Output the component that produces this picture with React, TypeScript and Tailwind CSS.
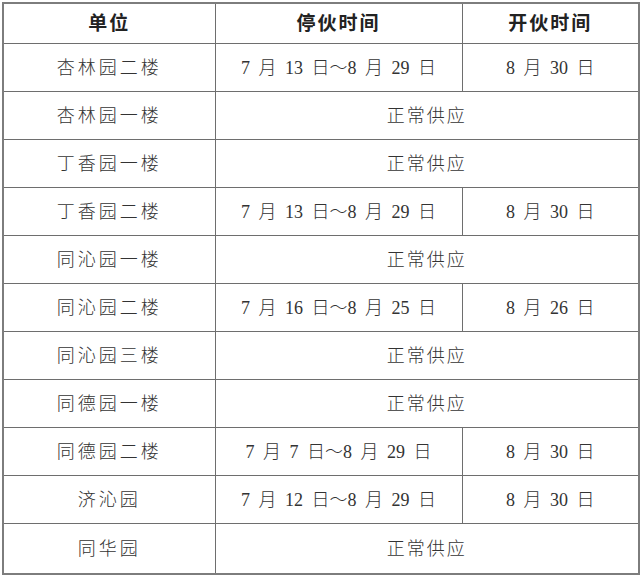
import React from "react";

type Row = { name: string; stop?: string; open?: string };

const rows: Row[] = [
  { name: "杏林园二楼", stop: "7 月 13 日～8 月 29 日", open: "8 月 30 日" },
  { name: "杏林园一楼" },
  { name: "丁香园一楼" },
  { name: "丁香园二楼", stop: "7 月 13 日～8 月 29 日", open: "8 月 30 日" },
  { name: "同沁园一楼" },
  { name: "同沁园二楼", stop: "7 月 16 日～8 月 25 日", open: "8 月 26 日" },
  { name: "同沁园三楼" },
  { name: "同德园一楼" },
  { name: "同德园二楼", stop: "7 月 7 日～8 月 29 日", open: "8 月 30 日" },
  { name: "济沁园", stop: "7 月 12 日～8 月 29 日", open: "8 月 30 日" },
  { name: "同华园" },
];

const font = { fontFamily: '"Liberation Serif", "Noto Sans CJK SC", serif' };

export default function App() {
  return (
    <div className="w-[640px] h-[577px] bg-white pt-[2px] pl-[2px]">
      <table
        className="border-collapse border-2 border-[#7d7d7d] text-[#333] w-[636px] table-fixed"
        style={font}
      >
        <colgroup>
          <col className="w-[212px]" />
          <col className="w-[247px]" />
          <col className="w-[177px]" />
        </colgroup>
        <thead>
          <tr className="h-[40px]">
            <th className="border border-[#6e6e6e] text-[19px] font-bold tracking-[2px] text-[#222] pt-[2px]">单位</th>
            <th className="border border-[#6e6e6e] text-[19px] font-bold tracking-[2px] text-[#222] pt-[2px]">停伙时间</th>
            <th className="border border-[#6e6e6e] text-[19px] font-bold tracking-[2px] text-[#222] pt-[2px]">开伙时间</th>
          </tr>
        </thead>
        <tbody>
          {rows.map((r, i) => (
            <tr key={i} className={i === rows.length - 1 ? "h-[51px]" : "h-[48px]"}>
              <td className="border border-[#6e6e6e] text-center text-[18px] tracking-[3px] font-light pt-[3px]">
                {r.name}
              </td>
              {r.stop ? (
                <>
                  <td className="border border-[#6e6e6e] text-center text-[18px] font-light pt-[3px] whitespace-pre [word-spacing:4px]">
                    {r.stop}
                  </td>
                  <td className="border border-[#6e6e6e] text-center text-[18px] font-light pt-[3px] whitespace-pre [word-spacing:4px]">
                    {r.open}
                  </td>
                </>
              ) : (
                <td colSpan={2} className="border border-[#6e6e6e] text-center text-[18px] tracking-[2px] font-light pt-[3px]">
                  正常供应
                </td>
              )}
            </tr>
          ))}
        </tbody>
      </table>
    </div>
  );
}
